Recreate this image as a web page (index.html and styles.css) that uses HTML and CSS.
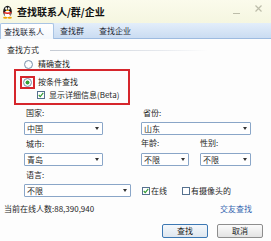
FILE: index.html
```html
<!DOCTYPE html>
<html>
<head>
<meta charset="utf-8">
<link rel="stylesheet" href="styles.css">
</head>
<body>
<div class="win">
  <div class="titlebar">
    <svg class="qq" viewBox="0 0 11 14" width="11" height="14">
      <ellipse cx="5.5" cy="6.5" rx="4.3" ry="5.8" fill="#1a1a1a"/>
      <ellipse cx="5.5" cy="9" rx="3" ry="3.6" fill="#fff"/>
      <ellipse cx="4.2" cy="3.6" rx="1" ry="1.3" fill="#fff"/>
      <ellipse cx="6.8" cy="3.6" rx="1" ry="1.3" fill="#fff"/>
      <ellipse cx="5.5" cy="5.3" rx="1.6" ry="0.8" fill="#f3b200"/>
      <path d="M1.6 6.6 Q5.5 8.6 9.4 6.6 L9.4 8 Q5.5 10 1.6 8 Z" fill="#e0231b"/>
      <path d="M6.8 8.6 L8.4 8.4 L8 10.6 Z" fill="#e0231b"/>
      <ellipse cx="3.3" cy="12.8" rx="2.2" ry="1" fill="#f0a300"/>
      <ellipse cx="7.7" cy="12.8" rx="2.2" ry="1" fill="#f0a300"/>
    </svg>
    <span class="title">查找联系人/群/企业</span>
    <span class="wbtns">
      <span class="wmin"></span>
      <svg class="wclose" viewBox="0 0 7 7" width="7" height="7"><path d="M0.5 0.5 L6.5 6.5 M6.5 0.5 L0.5 6.5" stroke="#bdbdaa" stroke-width="1.2"/></svg>
    </span>
  </div>
  <div class="tabs">
    <div class="tab tab1 active">查找联系人</div>
    <div class="tab tab2">查找群</div>
    <div class="tab tab3">查找企业</div>
  </div>
  <div class="content">
    <div class="sec"><span>查找方式</span><span class="rule"></span></div>
    <div class="opt exact"><span class="radio"></span><span>精确查找</span></div>
    <div class="mark">
      <div class="opt cond"><span class="mark-sm"><span class="radio on"></span></span><span>按条件查找</span></div>
      <div class="opt detail"><span class="check on"><svg viewBox="0 0 8 8" width="6" height="6"><path d="M1 4 L3 6.2 L7 1.2" fill="none" stroke="#2f9b2f" stroke-width="1.5"/></svg></span><span>显示详细信息(Beta)</span></div>
    </div>
    <div class="form">
      <div class="lbl">国家:</div>
      <div class="lbl">省份:</div>
      <div class="sel w79"><span>中国</span><span class="arr"></span></div>
      <div class="sel"><span>山东</span><span class="arr"></span></div>
      <div class="lbl">城市:</div>
      <div class="lbl pair"><span class="age">年龄:</span><span>性别:</span></div>
      <div class="sel w79"><span>青岛</span><span class="arr"></span></div>
      <div class="pairsel">
        <div class="sel w48"><span>不限</span><span class="arr"></span></div>
        <div class="sel w51"><span>不限</span><span class="arr"></span></div>
      </div>
      <div class="lbl">语言:</div>
      <div></div>
      <div class="sel"><span>不限</span><span class="arr"></span></div>
      <div class="checks">
        <span class="ck ck1"><span class="check on"><svg viewBox="0 0 8 8" width="6" height="6"><path d="M1 4 L3 6.2 L7 1.2" fill="none" stroke="#2f9b2f" stroke-width="1.5"/></svg></span><span>在线</span></span>
        <span class="ck ck2"><span class="check"></span><span>有摄像头的</span></span>
      </div>
    </div>
    <div class="footer">
      <span>当前在线人数:88,390,940</span>
      <span class="link">交友查找</span>
    </div>
    <div class="buttons">
      <div class="btn default">查找</div>
      <div class="btn">取消</div>
    </div>
  </div>
</div>
</body>
</html>
```

FILE: styles.css
```css
* { box-sizing: border-box; margin: 0; padding: 0; }
html, body { width: 271px; height: 241px; overflow: hidden; }
body {
  font-family: "Noto Sans CJK SC", "Liberation Sans", sans-serif;
  font-size: 8px;
  color: #1f1f1f;
  background: #fdfdfd;
  white-space: nowrap;
}
.win { width: 271px; height: 241px; }

.titlebar {
  height: 23px;
  background: linear-gradient(#fbfbec, #f5f6e0);
  display: flex;
  align-items: center;
  padding-left: 2px;
}
.qq { display: block; margin-right: 4px; }
.title { font-size: 10px; font-weight: bold; color: #111; line-height: 14px; }
.wbtns { margin-left: auto; display: flex; align-items: center; padding-right: 9px; height: 23px; }
.wmin { width: 7px; height: 1px; background: #bdbdaa; margin-right: 15px; margin-top: 4px; }
.wclose { display: block; margin-top: -6px; }

.tabs {
  height: 16px;
  background: linear-gradient(#e3eefa, #cadcf2);
  border-bottom: 1px solid #9dbbe0;
  display: flex;
  align-items: flex-end;
}
.tab { height: 15px; line-height: 15px; color: #1f2a38; }
.tab1 { padding: 0 0 0 4px; }
.tab2 { padding: 0 7px 0 6px; }
.tab3 { padding: 0 0 0 8px; }
.tab.active {
  background: linear-gradient(#ffffff, #f3f7fc);
  border: 1px solid #a9c4e4;
  border-bottom: none;
  border-radius: 2px 2px 0 0;
  height: 16px;
  margin-bottom: -1px;
  padding-left: 3px;
  width: 54px;
}

.content { padding-top: 4px; }
.sec { height: 14px; line-height: 14px; display: flex; align-items: center; padding-left: 7px; }
.rule {
  height: 1px;
  width: 158px;
  margin-left: 11px;
  background: linear-gradient(90deg, #c4cad3, #e6e9ee 70%, rgba(255,255,255,0));
}

.opt { display: flex; align-items: center; height: 14px; line-height: 14px; }
.exact { margin-top: 1px; height: 12px; line-height: 12px; padding-left: 24px; }
.exact .radio { margin-right: 5px; }

.radio {
  display: block;
  width: 9px; height: 9px;
  border-radius: 50%;
  border: 1px solid #7b91ab;
  background: radial-gradient(circle, #ffffff 40%, #e2e8ef);
}
.radio.on { background: radial-gradient(circle, #34a034 0 1.7px, #ffffff 2.3px, #e2e8ef); }

.mark {
  margin: -1px 0 0 14px;
  width: 116px;
  height: 36px;
  border: 2px solid #d6262c;
  padding-top: 4px;
}
.cond { padding-left: 4px; }
.mark-sm {
  width: 15px; height: 13px;
  border: 2px solid #d6262c;
  display: flex; align-items: center; justify-content: center;
  margin-right: 3px;
}
.detail { height: 12px; line-height: 12px; padding-left: 21px; }

.check {
  display: flex; align-items: center; justify-content: center;
  width: 8px; height: 8px;
  border: 1px solid #56718f;
  background: #fff;
  margin-right: 4px;
}
.check svg { display: block; }

.form {
  margin: 2px 0 0 24px;
  display: grid;
  grid-template-columns: 107px 110px;
  grid-template-rows: 12px 13px 12px 13px 12px 13px;
  column-gap: 10px;
  row-gap: 3px;
}
.lbl { line-height: 12px; padding-left: 2px; }
.lbl.pair { display: flex; padding-left: 0; line-height: 10px; }
.age { width: 59px; }

.sel {
  height: 13px;
  border: 1px solid #8aa6c8;
  border-radius: 1px;
  background: #fff;
  display: flex;
  align-items: center;
  justify-content: space-between;
  padding: 0 3px 0 2px;
  line-height: 11px;
}
.arr {
  width: 0; height: 0;
  border-left: 2.5px solid transparent;
  border-right: 2.5px solid transparent;
  border-top: 3px solid #333;
}
.w79 { width: 79px; }
.w48 { width: 48px; }
.w51 { width: 51px; }
.pairsel { display: flex; column-gap: 11px; }

.checks { display: flex; align-items: center; padding-left: 1px; }
.ck { display: flex; align-items: center; }
.ck .check { margin-right: 1px; }
.ck1 { margin-right: 15px; }

.footer {
  margin-top: 6px;
  height: 12px;
  line-height: 12px;
  display: flex;
  justify-content: space-between;
  padding: 0 19px 0 4px;
}
.link { color: #3566b0; }

.buttons {
  margin-top: 9px;
  display: flex;
  justify-content: flex-end;
  column-gap: 9px;
  padding-right: 8px;
}
.btn {
  width: 46px; height: 14px;
  line-height: 12px;
  text-align: center;
  border: 1px solid #8d8d8d;
  border-radius: 2px;
  background: linear-gradient(#fbfbfb, #e3e3e3);
  color: #1a1a1a;
}
.btn.default {
  border-color: #3d78b3;
  background: linear-gradient(#f4f8fc, #dfe7ef);
}
```
